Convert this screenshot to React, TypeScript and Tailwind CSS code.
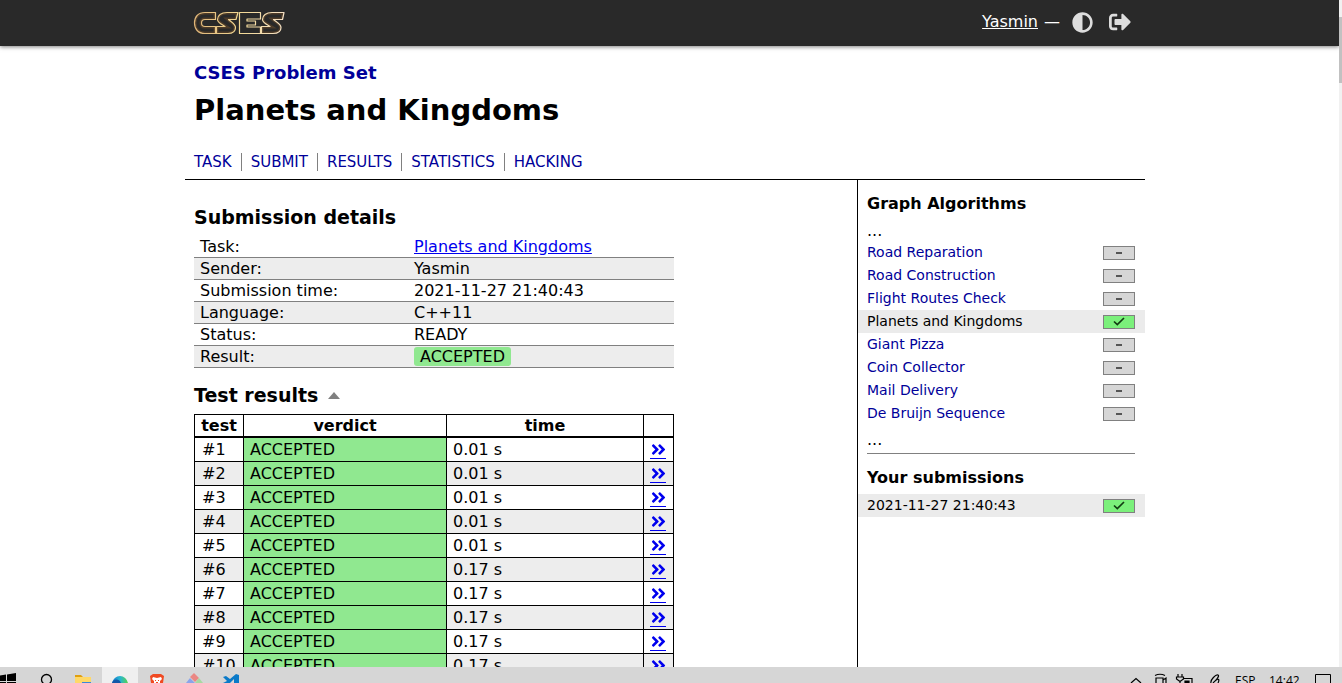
import React from "react";
import { FaAdjust, FaAngleDoubleRight, FaSignOutAlt } from "react-icons/fa";

const nav = ["Task", "Submit", "Results", "Statistics", "Hacking"];

const details: [string, React.ReactNode][] = [
  ["Task:", <a href="#task" className="text-[#0000ee] underline">Planets and Kingdoms</a>],
  ["Sender:", "Yasmin"],
  ["Submission time:", "2021-11-27 21:40:43"],
  ["Language:", "C++11"],
  ["Status:", "READY"],
  ["Result:", <span className="inline-block rounded-[3px] bg-[#90e890] px-1.5 leading-[19px]">ACCEPTED</span>],
];

const times = ["0.01", "0.01", "0.01", "0.01", "0.01", "0.17", "0.17", "0.17", "0.17", "0.17"];

const tasks = [
  { name: "Road Reparation", done: false },
  { name: "Road Construction", done: false },
  { name: "Flight Routes Check", done: false },
  { name: "Planets and Kingdoms", done: true },
  { name: "Giant Pizza", done: false },
  { name: "Coin Collector", done: false },
  { name: "Mail Delivery", done: false },
  { name: "De Bruijn Sequence", done: false },
];

const logoShapes = [
  "M22.5 1.5H12C5 1.5 1.5 6 1.5 12S5 22.500 12 22.500H22.500V15.500H12C9.500 15.500 8.500 14 8.500 12S9.500 8.500 12 8.500H22.500Z",
  "M45 1.500H34C28 1.500 24.500 4.500 24.500 8.500C24.500 11.500 28 13 32 15.500H23.500V22.500H35C40.500 22.500 42.500 19.500 42.500 16.500C42.500 13 39 11.500 35.500 8.500H43Z",
  "M46.500 1.500H67.500V8H54V10H62.500V14H54V16H67.500V22.500H46.500Z",
  "M91 1.500H79C73 1.500 69.500 4.500 69.500 8.500C69.500 11.500 73 13 77 15.500H68.500V22.500H80C86 22.500 88 19.500 88 16.500C88 13 84 11.500 80.500 8.500H89.500Z",
];

function Logo() {
  return (
    <svg width="92" height="24" viewBox="0 0 92 24" fill="none" aria-label="CSES" role="img">
      <defs>
        <linearGradient id="gold" gradientUnits="userSpaceOnUse" x1="0" y1="0" x2="92" y2="0">
          <stop offset="0" stopColor="#deb478" />
          <stop offset="0.5" stopColor="#f2d893" />
          <stop offset="1" stopColor="#f4e0c6" />
        </linearGradient>
        <clipPath id="letters">
          {logoShapes.map((d) => <path key={d} d={d} />)}
        </clipPath>
      </defs>
      <g clipPath="url(#letters)" stroke="#7a5228" strokeWidth="4" strokeOpacity="0.45">
        <path d={logoShapes[0]} />
        <path d={logoShapes[1]} />
        <path d={logoShapes[3]} />
      </g>
      <g stroke="url(#gold)" strokeWidth="1.200" strokeLinejoin="round">
        {logoShapes.map((d) => <path key={d} d={d} />)}
      </g>
    </svg>
  );
}

function Badge({ done }: { done: boolean }) {
  return done ? (
    <span className="flex h-3.5 w-8 items-center justify-center border border-[#808080] bg-[#7bf07b]">
      <svg width="12" height="9" viewBox="0 0 12 9" fill="none" stroke="#123c12" strokeWidth="1.700" aria-hidden="true">
        <path d="M1 4.500L4.300 7.600L11 1" />
      </svg>
    </span>
  ) : (
    <span className="flex h-3.5 w-8 items-center justify-center border border-[#808080] bg-[#d6d6d6]">
      <span className="h-0.5 w-1.5 bg-[#555555]" />
    </span>
  );
}

function SideRow({ name, done, current }: { name: string; done: boolean; current: boolean }) {
  return (
    <a
      href="#item"
      className={`flex items-center justify-between pr-2.5 pl-[9px] text-sm leading-[23px] ${current ? "bg-[#ebebeb] text-black" : "text-[#000099]"}`}
    >
      {name}
      <Badge done={done} />
    </a>
  );
}

function Taskbar() {
  return (
    <footer className="flex h-4 shrink-0 items-start justify-between overflow-hidden bg-[#d6d6d6]">
      <svg width="260" height="16" viewBox="0 0 260 16" aria-hidden="true">
        <defs>
          <linearGradient id="edge" x1="0" y1="0" x2="1" y2="0">
            <stop offset="0" stopColor="#1479cc" />
            <stop offset="0.5" stopColor="#27b5d0" />
            <stop offset="1" stopColor="#5bd34f" />
          </linearGradient>
        </defs>
        <path d="M0 8.500L6 7.500V14H0ZM7 7.400L16 6V14H7ZM0 15H6V16H0ZM7 15H16V16H7Z" fill="#000" />
        <circle cx="46.500" cy="12.500" r="5" fill="none" stroke="#000" strokeWidth="1.300" />
        <path d="M75 8H81L83 10H75Z" fill="#e0a010" />
        <path d="M75 10H91V16H75Z" fill="#ffd868" />
        <path d="M82 15H91V16H82Z" fill="#3b88d8" />
        <rect x="102" width="36" height="16" fill="#efefef" />
        <path d="M112 16A8.200 9 0 0 1 128 16Z" fill="url(#edge)" />
        <path d="M112 16C113 12 119 11 121 16Z" fill="#1257a8" />
        <path d="M150 9L153 7H161L164 9L163 16H151Z" fill="#f04a22" />
        <path d="M153 10L157 11L161 10L162 12L160 14V16H154V14L152 12Z" fill="#fff" />
        <path d="M155 13H156V14H155ZM158 13H159V14H158ZM156 15H158V16H156Z" fill="#f04a22" />
        <path d="M186 16L190 11L195 16Z" fill="#8ba4ea" />
        <path d="M190 10L194 6L199 11L195 15Z" fill="#ea8783" />
        <path d="M199 11L203 16H195Z" fill="#a8d8a0" />
        <path d="M223 10L226 9L230 12L236 7L239 8V16H234V12L230 16H223L227 14Z" fill="#0a7ac8" />
      </svg>
      <div className="flex items-start">
        <svg width="106" height="16" viewBox="0 0 106 16" fill="none" stroke="#000" strokeWidth="1.200" aria-hidden="true">
          <path d="M2 16L7 11.500L12 16" />
          <path d="M26 8.500Q31 6 36 8.500M27 16V11H34V16M34 13L37 11V16" />
          <path d="M49 7V10M53 7V10M47.500 10H54.500V12L51 14.500L47.500 12ZM51 14V16M55 11.500H63V16" />
          <path d="M56 14H60V16H56Z" fill="#000" />
          <path d="M82 16C81 13 87 7 89 8S87 13 84 16M86 14C89 11 91 12 89 16" />
        </svg>
        <span className="w-[34px] pt-1.5 font-['Open_Sans',sans-serif] text-xs leading-4">ESP</span>
        <span className="w-[46px] pt-1.5 font-['Open_Sans',sans-serif] text-xs leading-4">14:42</span>
        <svg width="27" height="16" viewBox="0 0 27 16" fill="none" stroke="#000" aria-hidden="true">
          <path d="M.500 16V7.500H15.500V16" />
        </svg>
      </div>
    </footer>
  );
}

export default function App() {
  return (
    <div className="flex h-screen flex-col overflow-hidden bg-white font-['Verdana','DejaVu_Sans',sans-serif] text-base text-black">
      <div className="flex min-h-0 flex-1">
        <div className="min-w-0 flex-1 overflow-hidden">
          <header className="bg-[#292929] pr-[9px] shadow-[0_1px_4px_rgba(0,0,0,0.5)]">
            <div className="mx-auto flex h-[46px] max-w-[960px] items-center justify-between pr-3.5 pb-0.5 pl-2">
              <a href="#home" className="pt-0.5"><Logo /></a>
              <div className="flex items-center text-white">
                <a href="#user" className="underline">Yasmin</a>
                <span className="pr-3 pl-1.5">—</span>
                <button type="button" aria-label="Toggle theme" className="mr-4 text-[#dddddd]"><FaAdjust size={21} /></button>
                <a href="#logout" aria-label="Log out" className="text-[#dddddd]"><FaSignOutAlt size={22} /></a>
              </div>
            </div>
          </header>
          <div className="pr-[9px]">
            <div className="mx-auto max-w-[960px]">
              <div className="border-b border-black px-[9px] pt-3.5">
                <h2 className="text-lg leading-[26px] font-bold text-[#000099]"><a href="#list">CSES Problem Set</a></h2>
                <h1 className="pt-1 text-[29px] leading-10 font-bold">Planets and Kingdoms</h1>
                <nav className="flex pt-[23px] pb-2 text-[15px] leading-[18px] text-[#000099] uppercase">
                  {nav.map((n) => (
                    <a key={n} href={`#${n}`} className="mr-[9px] border-r border-[#808080] pr-[9px] last:border-0">{n}</a>
                  ))}
                </nav>
              </div>
              <div className="flex">
                <main className="min-w-0 flex-1 px-[9px] pt-6">
                  <h3 className="text-[19px] leading-[26px] font-bold">Submission details</h3>
                  <table className="mt-1.5 w-[480px] max-w-full table-fixed border-collapse">
                    <tbody>
                      {details.map(([label, value]) => (
                        <tr key={label} className="border-b border-[#808080] even:bg-[#ededed]">
                          <th scope="row" className="w-[220px] p-0 pt-px pl-1.5 text-left leading-5 font-normal">{label}</th>
                          <td className="p-0 pt-px leading-5">{value}</td>
                        </tr>
                      ))}
                    </tbody>
                  </table>
                  <h3 className="flex items-center gap-2.5 pt-3.5 text-[19px] leading-[26px] font-bold">
                    Test results
                    <svg width="12" height="7" viewBox="0 0 12 7" aria-hidden="true"><path d="M6 0L12 7H0Z" fill="#808080" /></svg>
                  </h3>
                  <table className="mt-1.5 w-[480px] max-w-full table-fixed border-collapse">
                    <thead>
                      <tr>
                        {[["test", "w-[49px]"], ["verdict", "w-[203px]"], ["time", ""], ["", "w-[30px]"]].map(([h, w]) => (
                          <th key={h} className={`h-[22px] border border-b-2 border-black p-0 leading-[21px] font-bold ${w}`}>{h}</th>
                        ))}
                      </tr>
                    </thead>
                    <tbody>
                      {times.map((t, i) => (
                        <tr key={i} className="even:bg-[#ededed]">
                          <td className="border border-black p-0 pt-px pl-[7px] leading-[22px]">#{i + 1}</td>
                          <td className="border border-black bg-[#90e890] p-0 pt-px pl-1.5 leading-[22px]">ACCEPTED</td>
                          <td className="border border-black p-0 pt-px pl-1.5 leading-[22px]">{t} s</td>
                          <td className="border border-black p-0 pt-px pl-1.5">
                            <a href="#details" aria-label="Details" className="block w-4 border-b border-[#0000ee] text-[#0000ee]"><FaAngleDoubleRight size={17} /></a>
                          </td>
                        </tr>
                      ))}
                    </tbody>
                  </table>
                </main>
                <aside className="w-72 shrink-0 border-l border-black pt-3">
                  <h4 className="px-[9px] leading-6 font-bold">Graph Algorithms</h4>
                  <div className="px-[9px] pt-1 leading-[21px]">...</div>
                  {tasks.map((t) => (
                    <SideRow key={t.name} name={t.name} done={t.done} current={t.done} />
                  ))}
                  <div className="px-[9px] pt-1 pb-[3px] leading-[21px]">...</div>
                  <hr className="mr-2.5 ml-[9px] border-[#808080]" />
                  <h4 className="px-[9px] pt-3 pb-1 leading-6 font-bold">Your submissions</h4>
                  <SideRow name="2021-11-27 21:40:43" done current />
                </aside>
              </div>
            </div>
          </div>
        </div>
        <div className="w-[3px] shrink-0 bg-[#f1f1f1] pt-[17px]" aria-hidden="true">
          <div className="h-[66px] bg-[#c1c1c1]" />
        </div>
      </div>
      <Taskbar />
    </div>
  );
}
